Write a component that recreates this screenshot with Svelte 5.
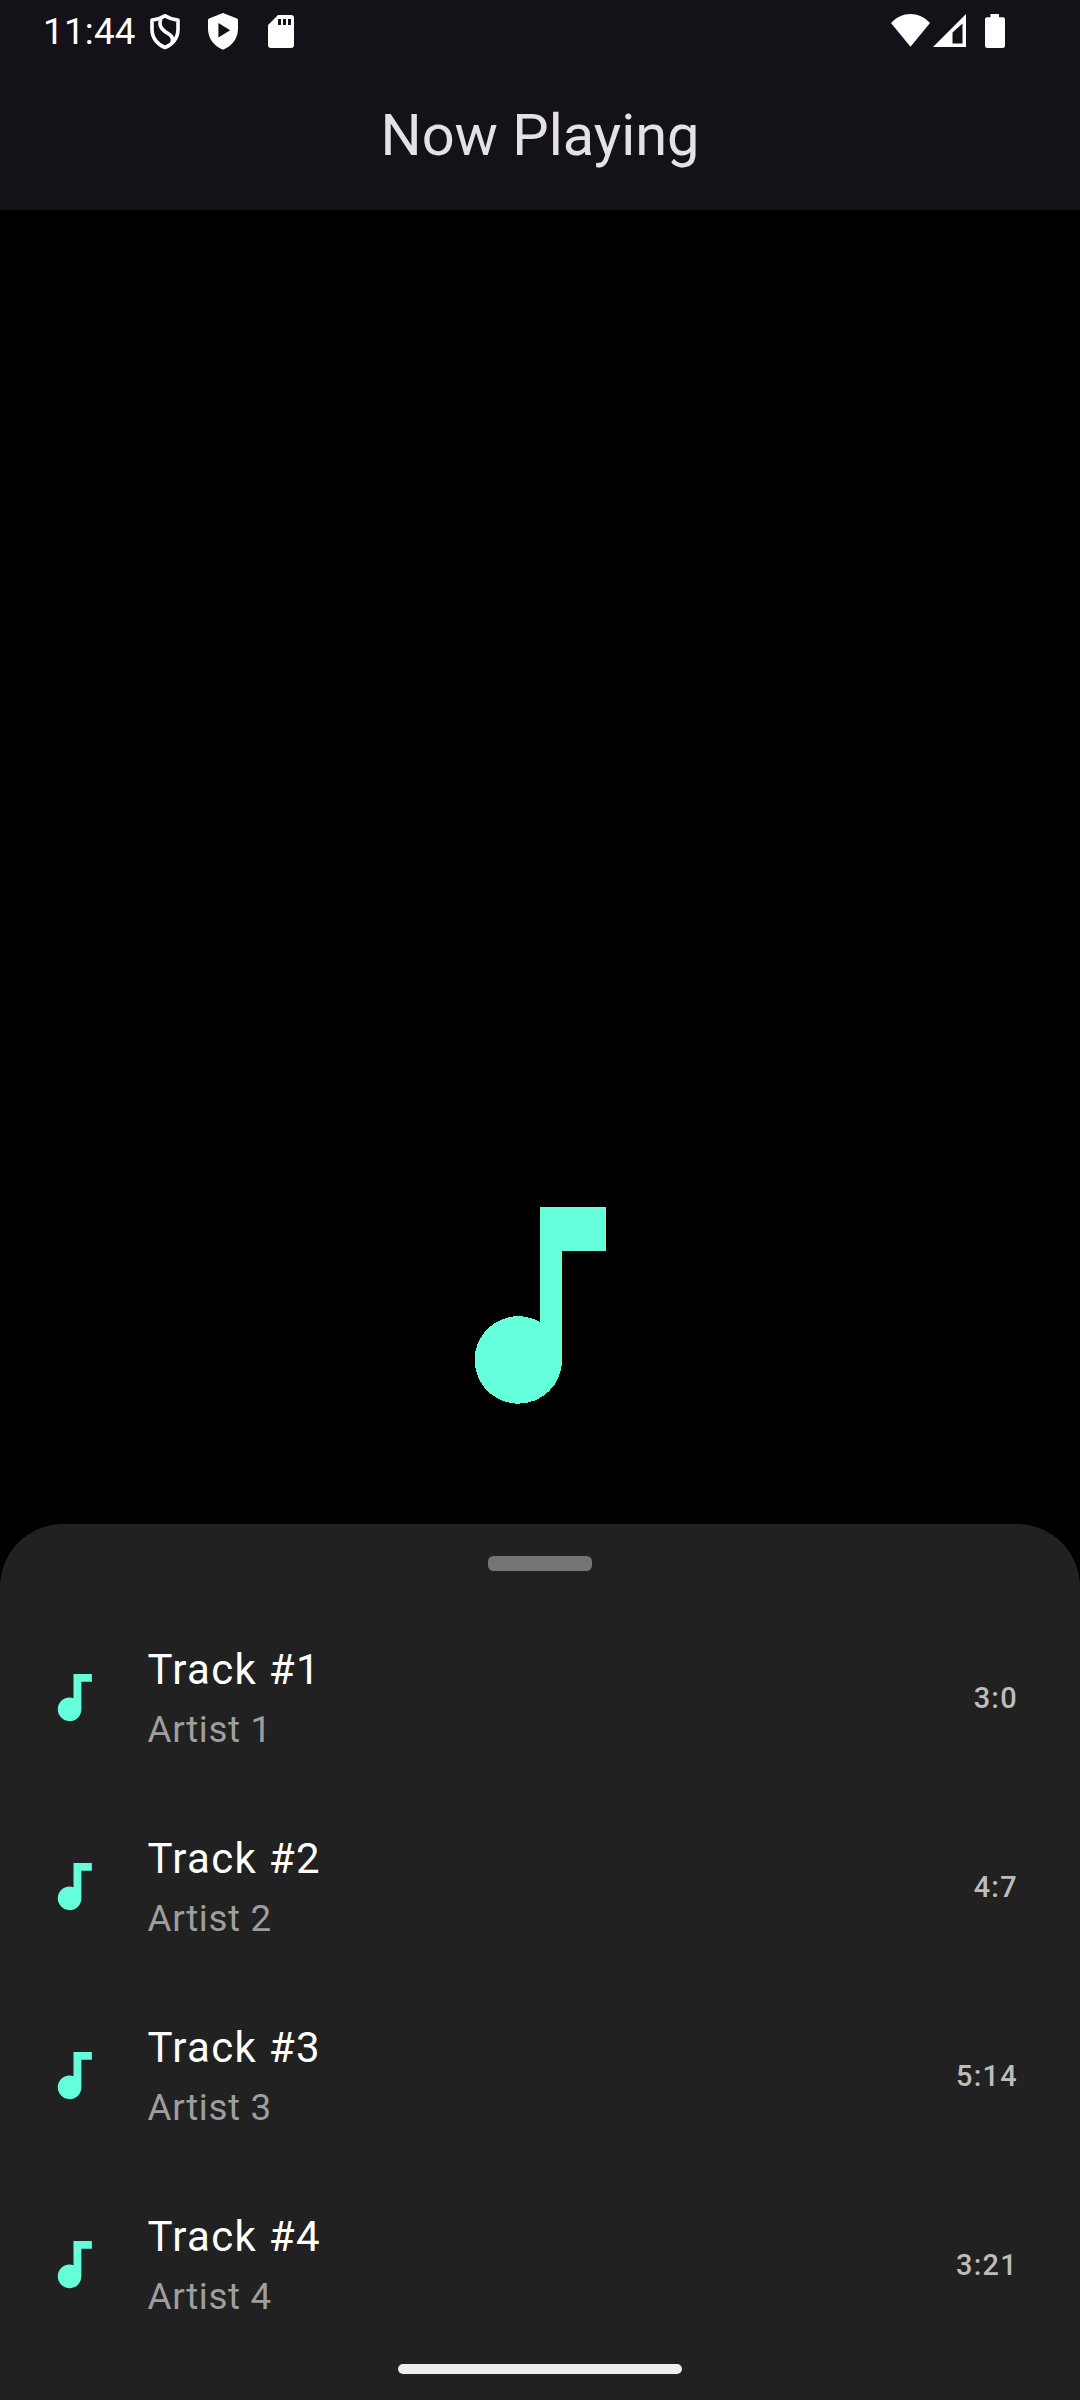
<script>
  const tracks = [
    { title: 'Track #1', artist: 'Artist 1', length: '3:0' },
    { title: 'Track #2', artist: 'Artist 2', length: '4:7' },
    { title: 'Track #3', artist: 'Artist 3', length: '5:14' },
    { title: 'Track #4', artist: 'Artist 4', length: '3:21' },
  ];
</script>

<div class="screen">
  <header class="top">
    <div class="status">
      <span class="time">11:44</span>
      <svg class="shield" width="30" height="36" viewBox="0 0 30 36" fill="none" stroke="#fff" stroke-width="3.6" stroke-linejoin="round">
        <path d="M15 1.8C11.6 4 6.5 5.7 2 6V15.500C2 24.500 8 31 15 33.500C22 31 28 24.500 28 15.500V6C23.500 5.700 18.400 4 15 1.800Z" />
        <path d="M10.800 4C8.500 12.500 11.500 14.500 15 17.500C20 21 24 22 22 29" />
      </svg>
      <svg class="shield-play" width="30" height="37" viewBox="0 0 30 37" fill="#fff">
        <path fill-rule="evenodd" d="M15 0 29 5.500Q30 6 30 7V15.500C30 26 23.500 33.500 15 36.700C6.500 33.500 0 26 0 15.500V7Q0 6 1 5.500ZM10.400 10V24.500L22.200 17.300Z" />
      </svg>
      <svg class="sd" width="26" height="33" viewBox="0 0 26 33" fill="#fff">
        <path fill-rule="evenodd" d="M10 0H23Q26 0 26 3V30Q26 33 23 33H3Q0 33 0 30V10ZM10 4V10H13V4ZM15 4V10H18V4ZM20 4V10H23V4Z" />
      </svg>
      <span class="spacer"></span>
      <svg class="wifi" width="39" height="33" viewBox="0 0 39 33" fill="#fff">
        <path d="M0 9C11 -3 28 -3 39 9L19.500 32.700Z" />
      </svg>
      <svg class="cell" width="33" height="33" viewBox="0 0 33 33" fill="#fff">
        <path fill-rule="evenodd" d="M33 0V33H0ZM29.500 9.500 19.500 18.500V29.500H29.500Z" />
      </svg>
      <svg class="battery" width="20" height="34" viewBox="0 0 20 34" fill="#fff">
        <path d="M5.500 0H14V3.300H18Q20 3.300 20 5.500V31.500Q20 34 17.500 34H2.500Q0 34 0 31.500V5.500Q0 3.300 2 3.300H5.500Z" />
      </svg>
    </div>
    <h1>Now Playing</h1>
  </header>

  <main class="artwork">
    <svg class="cover" viewBox="0 0 24 24" fill="#64ffda" shape-rendering="crispEdges">
      <path d="M12 3v10.550c-.59-.34-1.270-.55-2-.55-2.210 0-4 1.790-4 4s1.790 4 4 4 4-1.790 4-4V7h4V3z" />
    </svg>
  </main>

  <section class="sheet">
    <div class="handle"></div>
    <ul>
      {#each tracks as track}
        <li>
          <svg class="note" viewBox="0 0 24 24" fill="#64ffda">
            <path d="M12 3v9.280c-.47-.17-.97-.28-1.500-.28C8.010 12 6 14.010 6 16.500S8.010 21 10.500 21c2.310 0 4.200-1.750 4.450-4H15V6h4V3z" />
          </svg>
          <div class="info">
            <div class="title">{track.title}</div>
            <div class="artist">{track.artist}</div>
          </div>
          <div class="length">{track.length}</div>
        </li>
      {/each}
    </ul>
    <div class="nav-bar"></div>
  </section>
</div>

<style>
  :global(body) {
    margin: 0;
    background: #000;
  }
  .screen {
    display: flex;
    flex-direction: column;
    width: 1080px;
    height: 2400px;
    overflow: hidden;
    background: #000;
    font-family: Roboto, sans-serif;
  }
  .top {
    height: 210px;
    flex: none;
    background: #141218;
  }
  .status {
    display: flex;
    align-items: flex-start;
    height: 63px;
    box-sizing: border-box;
    padding: 14px 75px 0 43px;
    color: #fff;
  }
  .status svg {
    flex: none;
  }
  .time {
    width: 107px;
    margin-top: -4px;
    font-size: 36.75px;
    line-height: 43px;
    letter-spacing: 0.25px;
  }
  .shield-play {
    margin: -1px 0 0 28px;
  }
  .sd {
    margin: 1px 0 0 30px;
  }
  .spacer {
    flex: 1;
  }
  .cell {
    margin-left: 3px;
  }
  .battery {
    margin-left: 19px;
  }
  h1 {
    margin: 0;
    height: 147px;
    text-align: center;
    color: #e6e0e9;
    font-size: 57.75px;
    font-weight: 400;
    line-height: 145px;
  }
  .artwork {
    display: flex;
    flex: 1;
    flex-direction: column;
    align-items: center;
    justify-content: flex-end;
    padding-bottom: 87.6px;
  }
  .cover {
    width: 262.5px;
    height: 262.5px;
  }
  .sheet {
    display: flex;
    flex: none;
    flex-direction: column;
    align-items: center;
    box-sizing: border-box;
    height: 876px;
    padding: 32px 0 26px;
    border-radius: 63px 63px 0 0;
    background: #212121;
  }
  .handle {
    flex: none;
    width: 104px;
    height: 15px;
    border-radius: 5.5px;
    background: #757575;
  }
  ul {
    flex: 1;
    align-self: stretch;
    margin: 32px 0 0;
    padding: 0;
    list-style: none;
  }
  li {
    display: flex;
    align-items: center;
    box-sizing: border-box;
    height: 189px;
    padding: 0 62px 0 42px;
  }
  .note {
    width: 63px;
    height: 63px;
    margin-right: 42.5px;
  }
  .info {
    flex: 1;
    padding-top: 2px;
  }
  .title {
    color: #fff;
    font-size: 42px;
    line-height: 62px;
    letter-spacing: 1.3125px;
  }
  .artist {
    color: #9e9e9e;
    font-size: 36.75px;
    line-height: 57px;
    letter-spacing: 0.656px;
  }
  .length {
    color: #bdbdbd;
    font-size: 28.875px;
    font-weight: 500;
    line-height: 42px;
    letter-spacing: 1.3125px;
  }
  .nav-bar {
    flex: none;
    width: 284px;
    height: 10px;
    border-radius: 5px;
    background: #eee;
  }
</style>
